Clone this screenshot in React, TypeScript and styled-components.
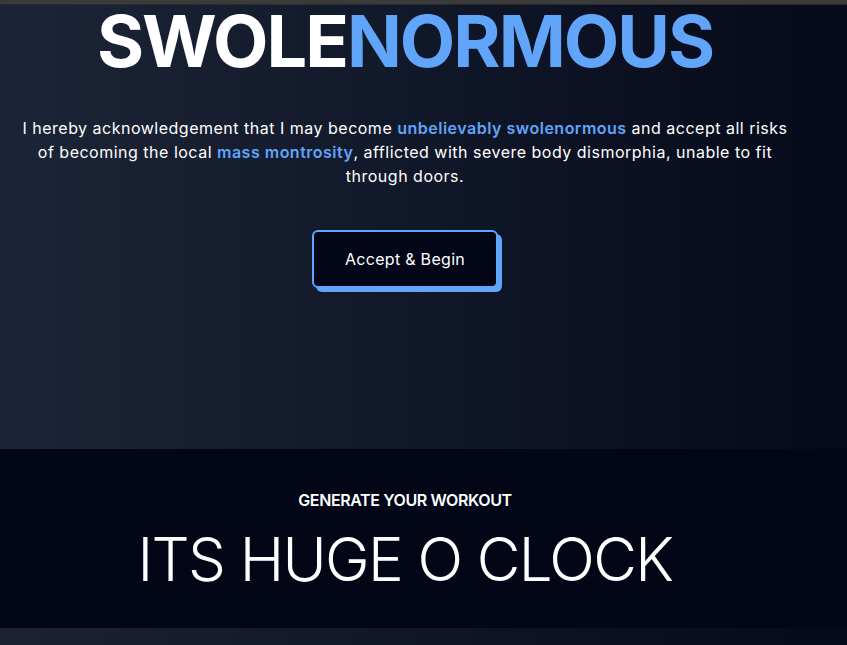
import React from "react";
import styled, { createGlobalStyle } from "styled-components";

const GlobalStyle = createGlobalStyle`
  html, body { margin: 0; padding: 0; background: #020617; }
  body { font-family: Inter, "Noto Sans", sans-serif; color: #ffffff; }
  * { box-sizing: border-box; }
`;

const TopBar = styled.div`
  height: 5px;
  background: #3b3b3b;
  border-bottom: 1px solid #2a2a2a;
`;

const Hero = styled.section`
  min-height: 444px;
  background: linear-gradient(to right, #1c2537, #050a1a);
  display: flex;
  flex-direction: column;
  align-items: center;
  padding: 0 37px 0 0;
`;

const Title = styled.h1`
  margin: 0;
  font-size: 72px;
  line-height: 1;
  font-weight: 700;
  letter-spacing: -2px;
`;

const Blue = styled.span`
  color: #60a5fa;
`;

const Lead = styled.p`
  margin: 39px 0 0;
  font-size: 16px;
  line-height: 24px;
  letter-spacing: 0.5px;
  text-align: center;
  max-width: 800px;
`;

const Strong = styled.span`
  color: #60a5fa;
  font-weight: 600;
`;

const AcceptButton = styled.button`
  margin-top: 42px;
  font-family: inherit;
  font-size: 16px;
  line-height: 24px;
  letter-spacing: 0.3px;
  color: #ffffff;
  background: #020617;
  border: 2px solid #60a5fa;
  border-radius: 6px;
  padding: 15px 31px;
  box-shadow: 4px 4px 0 #60a5fa;
  cursor: pointer;
`;

const Generator = styled.section`
  background: #020617;
  display: flex;
  flex-direction: column;
  align-items: center;
  padding: 39px 37px 33px 0;
`;

const Label = styled.p`
  margin: 0;
  font-size: 16px;
  line-height: 24px;
  font-weight: 600;
  letter-spacing: -0.4px;
  text-transform: uppercase;
`;

const BigHeading = styled.h2`
  margin: 11px 0 0;
  font-size: 60px;
  font-weight: 300;
  line-height: normal;
  letter-spacing: -1.6px;
  text-transform: uppercase;
`;

const NextSection = styled.section`
  min-height: 200px;
  background: linear-gradient(to right, #1a2234, #050a1a);
`;

export default function App() {
  return (
    <>
      <GlobalStyle />
      <TopBar />
      <Hero>
        <Title>
          SWOLE<Blue>NORMOUS</Blue>
        </Title>
        <Lead>
          I hereby acknowledgement that I may become{" "}
          <Strong>unbelievably swolenormous</Strong> and accept all risks
          <br />
          of becoming the local <Strong>mass montrosity</Strong>, afflicted with
          severe body dismorphia, unable to fit
          <br />
          through doors.
        </Lead>
        <AcceptButton>Accept &amp; Begin</AcceptButton>
      </Hero>
      <Generator>
        <Label>Generate your workout</Label>
        <BigHeading>Its Huge O Clock</BigHeading>
      </Generator>
      <NextSection />
    </>
  );
}
